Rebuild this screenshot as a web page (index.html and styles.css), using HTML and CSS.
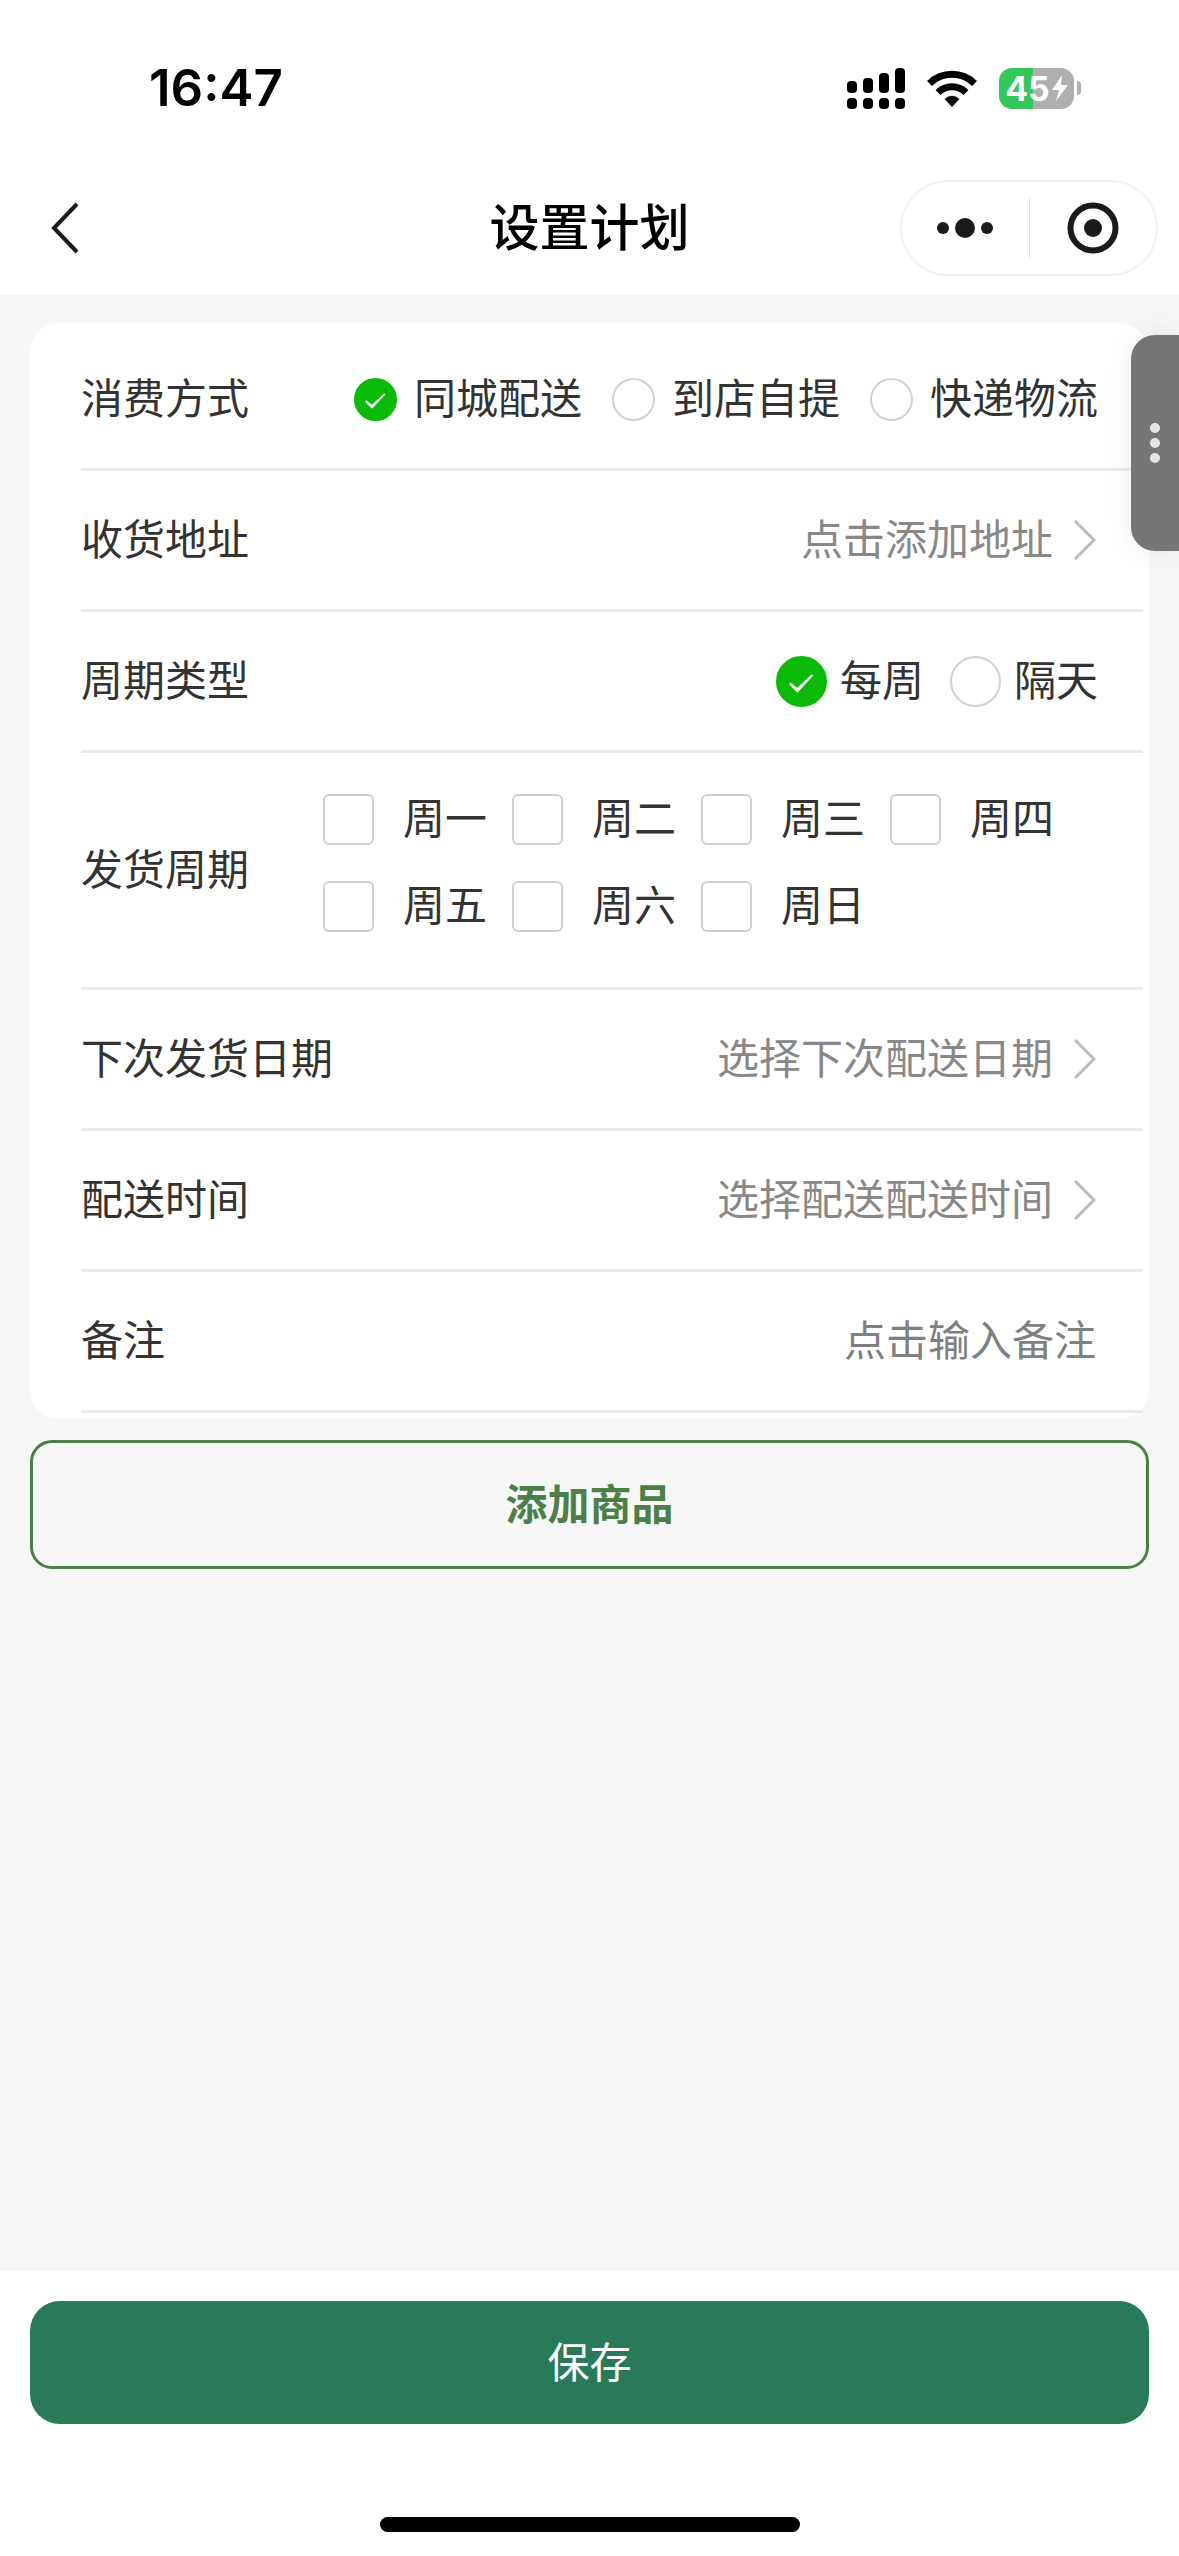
FILE: index.html
```html
<!DOCTYPE html>
<html lang="zh-CN">
    <head>
        <meta charset="UTF-8">
        <meta name="viewport" content="width=device-width, initial-scale=1">
        <title>设置计划</title>
        <link rel="stylesheet" href="styles.css">
    </head>
    <body>
        <header class="header">
            <div class="status-bar">
                <span class="time">16:47</span>
                <div class="status-icons">
                    <!-- dual sim signal -->
                    <svg width="58" height="41" viewBox="0 0 58 41">
                        <rect x="0" y="13" width="10" height="12" rx="4"/>
                        <rect x="16" y="10" width="10" height="15" rx="4"/>
                        <rect x="32" y="5" width="10" height="20" rx="4"/>
                        <rect x="48" y="0" width="10" height="25" rx="4"/>
                        <rect x="0" y="30" width="10" height="11" rx="4"/>
                        <rect x="16" y="30" width="10" height="11" rx="4"/>
                        <rect x="32" y="30" width="10" height="11" rx="4"/>
                        <rect x="48" y="30" width="10" height="11" rx="4"/>
                    </svg>
                    <svg width="50" height="37" viewBox="0 0 50 37">
                        <path d="M2.5 13.5 A32 32 0 0 1 47.5 13.5" fill="none" stroke="#000" stroke-width="7"/>
                        <path d="M11 22.5 A20 20 0 0 1 39 22.5" fill="none" stroke="#000" stroke-width="7"/>
                        <path d="M17.5 29 Q25 22.5 32.5 29 L25 37 Z"/>
                    </svg>
                    <div class="battery">
                        <div class="battery-body">
                            <span>45</span>
                            <svg width="16" height="26" viewBox="0 0 16 26"><path d="M10 0 L0 15 H7 L4 26 L16 10 H9 Z" fill="#fff"/></svg>
                        </div>
                        <div class="battery-tip"></div>
                    </div>
                </div>
            </div>
            <nav class="nav-bar">
                <button class="back" type="button" aria-label="返回">
                    <svg width="29" height="52" viewBox="0 0 29 52"><path d="M26 2 L3 26 L26 50" fill="none" stroke="#1a1a1a" stroke-width="4"/></svg>
                </button>
                <h1 class="title">设置计划</h1>
                <div class="capsule">
                    <button type="button" aria-label="更多">
                        <svg width="58" height="22" viewBox="0 0 58 22" fill="#1a1a1a">
                            <circle cx="7" cy="11" r="6"/>
                            <circle cx="29" cy="11" r="10"/>
                            <circle cx="51" cy="11" r="6"/>
                        </svg>
                    </button>
                    <button type="button" aria-label="关闭">
                        <svg width="52" height="52" viewBox="0 0 52 52" fill="#1a1a1a">
                            <circle cx="26" cy="26" r="22.5" fill="none" stroke="#1a1a1a" stroke-width="6"/>
                            <circle cx="26" cy="26" r="9"/>
                        </svg>
                    </button>
                </div>
            </nav>
        </header>

        <main class="content">
            <form class="card" id="plan">
                <div class="row" role="radiogroup" aria-labelledby="modeLabel">
                    <span class="label" id="modeLabel">消费方式</span>
                    <div class="mode-list">
                        <label><input type="radio" name="mode" checked>同城配送</label>
                        <label><input type="radio" name="mode">到店自提</label>
                        <label><input type="radio" name="mode">快递物流</label>
                    </div>
                </div>
                <div class="row">
                    <span class="label">收货地址</span>
                    <button class="picker" type="button">点击添加地址
                        <svg width="23" height="42" viewBox="0 0 23 42"><path d="M2 2 L21 21 L2 40"/></svg>
                    </button>
                </div>
                <div class="row" role="radiogroup" aria-labelledby="typeLabel">
                    <span class="label" id="typeLabel">周期类型</span>
                    <div class="type-list">
                        <label><input type="radio" name="type" checked>每周</label>
                        <label><input type="radio" name="type">隔天</label>
                    </div>
                </div>
                <div class="row" role="group" aria-labelledby="dayLabel">
                    <span class="label" id="dayLabel">发货周期</span>
                    <div class="day-list">
                        <label><input type="checkbox" name="day">周一</label>
                        <label><input type="checkbox" name="day">周二</label>
                        <label><input type="checkbox" name="day">周三</label>
                        <label><input type="checkbox" name="day">周四</label>
                        <label><input type="checkbox" name="day">周五</label>
                        <label><input type="checkbox" name="day">周六</label>
                        <label><input type="checkbox" name="day">周日</label>
                    </div>
                </div>
                <div class="row">
                    <span class="label">下次发货日期</span>
                    <button class="picker" type="button">选择下次配送日期
                        <svg width="23" height="42" viewBox="0 0 23 42"><path d="M2 2 L21 21 L2 40"/></svg>
                    </button>
                </div>
                <div class="row">
                    <span class="label">配送时间</span>
                    <button class="picker" type="button">选择配送配送时间
                        <svg width="23" height="42" viewBox="0 0 23 42"><path d="M2 2 L21 21 L2 40"/></svg>
                    </button>
                </div>
                <div class="row">
                    <label class="label" for="remark">备注</label>
                    <input class="remark" id="remark" type="text" placeholder="点击输入备注">
                </div>
            </form>
            <button class="add-button" type="button">添加商品</button>
        </main>

        <footer class="footer">
            <button class="save-button" type="submit" form="plan">保存</button>
            <div class="home-indicator"></div>
        </footer>

        <!-- floating drawer handle -->
        <button class="side-tab" type="button" aria-label="菜单">
            <i></i><i></i><i></i>
        </button>
    </body>
</html>
```

FILE: styles.css
```css
* {
    box-sizing: border-box;
}

body {
    display: flex;
    flex-direction: column;
    min-height: 100vh;
    margin: 0;
    background-color: #f7f7f7;
    color: #333;
    font-family: Inter, 'Noto Sans CJK SC', sans-serif;
    font-size: 42px;
    line-height: 60px;
}

button, input {
    margin: 0;
    padding: 0;
    border: none;
    background: none;
    color: inherit;
    font: inherit;
}

svg {
    display: block;
    flex-shrink: 0;
}

/* Status bar and title bar */
.header {
    background-color: #fff;
}

.status-bar {
    display: flex;
    justify-content: space-between;
    align-items: center;
    height: 176px;
    padding: 0 98px 0 149px;
}

.time {
    color: #000;
    font-size: 51px;
    font-weight: 600;
}

.status-icons {
    display: flex;
    align-items: center;
    gap: 22px;
}

.battery {
    display: flex;
    align-items: center;
    gap: 3px;
}

.battery-body {
    display: flex;
    align-items: center;
    justify-content: center;
    gap: 2px;
    width: 75px;
    height: 41px;
    border-radius: 13px;
    background: linear-gradient(to right, #34c759 45%, #b0aeae 45%);
    color: #fff;
    font-size: 34px;
    font-weight: 700;
    line-height: 41px;
}

.battery-tip {
    width: 4px;
    height: 14px;
    border-radius: 0 6px 6px 0;
    background-color: #b0aeae;
}

.nav-bar {
    display: grid;
    grid-template-columns: 1fr auto 1fr;
    align-items: center;
    height: 119px;
    padding: 0 21px 15px;
}

.back {
    justify-self: start;
    padding-left: 30px;
    cursor: pointer;
}

.title {
    margin: 0;
    color: #000;
    font-size: 50px;
    font-weight: 500;
}

.capsule {
    display: flex;
    justify-self: end;
    align-items: center;
    width: 258px;
    height: 96px;
    border: 2px solid #f2f2f2;
    border-radius: 48px;
}

.capsule button {
    display: flex;
    flex: 1;
    justify-content: center;
    align-items: center;
    height: 60px;
    cursor: pointer;
}

.capsule button + button {
    border-left: 1px solid #e2e2e2;
}

/* Form */
.content {
    flex: 1;
    padding: 28px 30px;
}

.card {
    padding: 7px 6px 6px 51px;
    border-radius: 30px;
    background-color: #fff;
}

.row {
    display: flex;
    justify-content: space-between;
    align-items: center;
    min-height: 141px;
    padding-right: 45px;
    border-bottom: 3px solid #ebebeb;
}

.row label {
    display: flex;
    align-items: center;
}

.mode-list {
    display: flex;
    gap: 30px;
}

.mode-list label {
    gap: 17px;
}

.mode-list input {
    width: 43px;
    height: 43px;
}

.type-list {
    display: flex;
    gap: 26px;
}

.type-list label {
    gap: 13px;
}

.type-list input,
.day-list input {
    width: 51px;
    height: 51px;
}

.day-list {
    display: grid;
    grid-template-columns: repeat(4, auto);
    gap: 27px 25px;
    padding: 36px 44px 51px 0;
}

.day-list label {
    gap: 29px;
}

input[type="radio"],
input[type="checkbox"] {
    flex-shrink: 0;
    appearance: none;
    border: 2px solid #d1d1d1;
    background-color: #fff;
}

input[type="radio"] {
    border-radius: 50%;
}

input[type="checkbox"] {
    border-radius: 6px;
}

input:checked {
    border-color: #09bb07;
    background: #09bb07 url("data:image/svg+xml,%3Csvg xmlns='http://www.w3.org/2000/svg' viewBox='0 0 24 24'%3E%3Cpath d='M5.6 13.4 L6.5 12.5 L9.8 15.3 L17.2 8.3 L18 8.900 L9.900 17.700 Z' fill='%23fff'/%3E%3C/svg%3E") center / 100% no-repeat;
}

.picker {
    display: flex;
    align-items: center;
    gap: 20px;
    padding-right: 2px;
    color: #888;
    cursor: pointer;
}

.picker path {
    fill: none;
    stroke: #bbb;
    stroke-width: 3;
}

.remark {
    flex: 1;
    min-width: 0;
    padding-right: 2px;
    text-align: right;
    outline: none;
}

.remark::placeholder {
    color: #808080;
    opacity: 1;
}

.add-button {
    width: 100%;
    height: 129px;
    margin-top: 21px;
    border: 3px solid #4c8048;
    border-radius: 22px;
    color: #4c8048;
    font-weight: 700;
    cursor: pointer;
}

/* Bottom bar */
.footer {
    display: flex;
    flex-direction: column;
    align-items: center;
    padding: 30px 30px 24px;
    background-color: #fff;
}

.save-button {
    width: 100%;
    height: 123px;
    border-radius: 30px;
    background-color: #287a58;
    color: #fff;
    cursor: pointer;
}

.home-indicator {
    width: 420px;
    height: 15px;
    margin-top: 93px;
    border-radius: 8px;
    background-color: #000;
}

.side-tab {
    position: fixed;
    top: 335px;
    right: 0;
    display: flex;
    flex-direction: column;
    justify-content: center;
    align-items: center;
    gap: 5px;
    width: 48px;
    height: 216px;
    border-radius: 24px 0 0 24px;
    background-color: #767676;
    box-shadow: 0 0 30px rgba(0, 0, 0, 0.08);
    cursor: pointer;
}

.side-tab i {
    width: 10px;
    height: 10px;
    border-radius: 50%;
    background-color: #e6e6e6;
}
```
